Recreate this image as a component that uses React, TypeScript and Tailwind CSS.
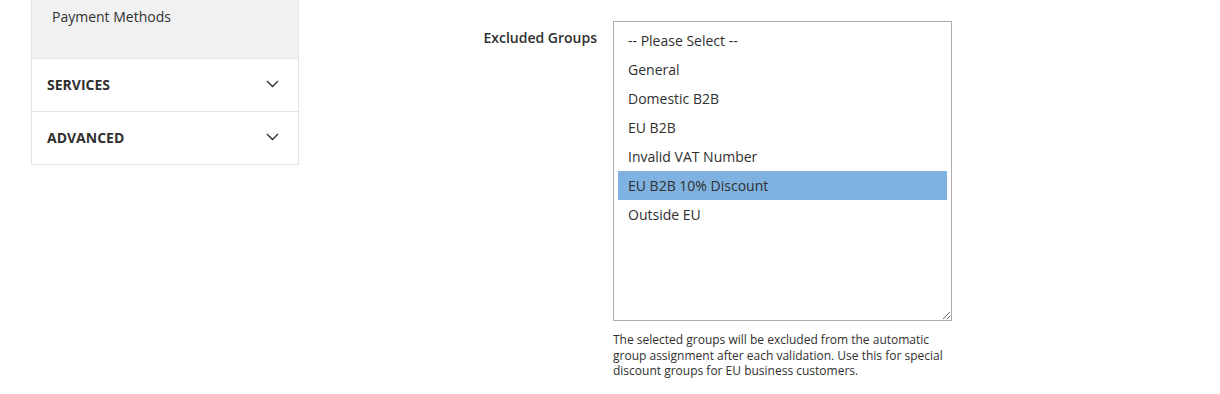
const GROUPS = [
  "-- Please Select --",
  "General",
  "Domestic B2B",
  "EU B2B",
  "Invalid VAT Number",
  "EU B2B 10% Discount",
  "Outside EU",
];

const SELECTED = "EU B2B 10% Discount";

function Chevron() {
  return (
    <svg width="13" height="8" viewBox="0 0 13 8" fill="none" stroke="#303030" strokeWidth="1.4">
      <path d="M1 1l5.5 5.5L12 1" />
    </svg>
  );
}

function SectionRow({ title }: { title: string }) {
  return (
    <div className="flex h-[53px] items-center justify-between border-t border-[#e3e3e3] pb-[2px] pl-[15px] pr-[19px]">
      <span className="text-[14px] font-bold uppercase text-[#303030]">{title}</span>
      <Chevron />
    </div>
  );
}

export default function App() {
  return (
    <div
      className="flex h-[394px] w-[1220px] overflow-hidden bg-white text-[#303030]"
      style={{ fontFamily: '"Open Sans", "Liberation Sans", sans-serif' }}
    >
      {/* Sidebar */}
      <div className="ml-[31px] w-[268px] shrink-0 self-start border-x border-b border-[#e3e3e3]">
        <div className="h-[58px] bg-[#f1f1f1] pl-[20px] pt-[7px] text-[14px] leading-[20px]">
          Payment Methods
        </div>
        <SectionRow title="Services" />
        <SectionRow title="Advanced" />
      </div>

      {/* Label */}
      <div className="w-[314px] shrink-0 pr-[16px] pt-[28px] text-right text-[14px] font-semibold leading-[20px]">
        Excluded Groups
      </div>

      {/* Field */}
      <div className="w-[339px] shrink-0 pt-[21px]">
        <div className="h-[300px] resize overflow-auto border border-[#adadad] bg-white px-[4px] pt-[4px]">
          {GROUPS.map((g) => (
            <div
              key={g}
              className={`flex h-[29px] items-center pl-[10px] text-[14px] ${
                g === SELECTED ? "bg-[#7fb2e0]" : ""
              }`}
            >
              {g}
            </div>
          ))}
        </div>
        <p className="mt-[11px] text-[12px] leading-[15.5px]">
          The selected groups will be excluded from the automatic group assignment after each
          validation. Use this for special discount groups for EU business customers.
        </p>
      </div>
    </div>
  );
}
